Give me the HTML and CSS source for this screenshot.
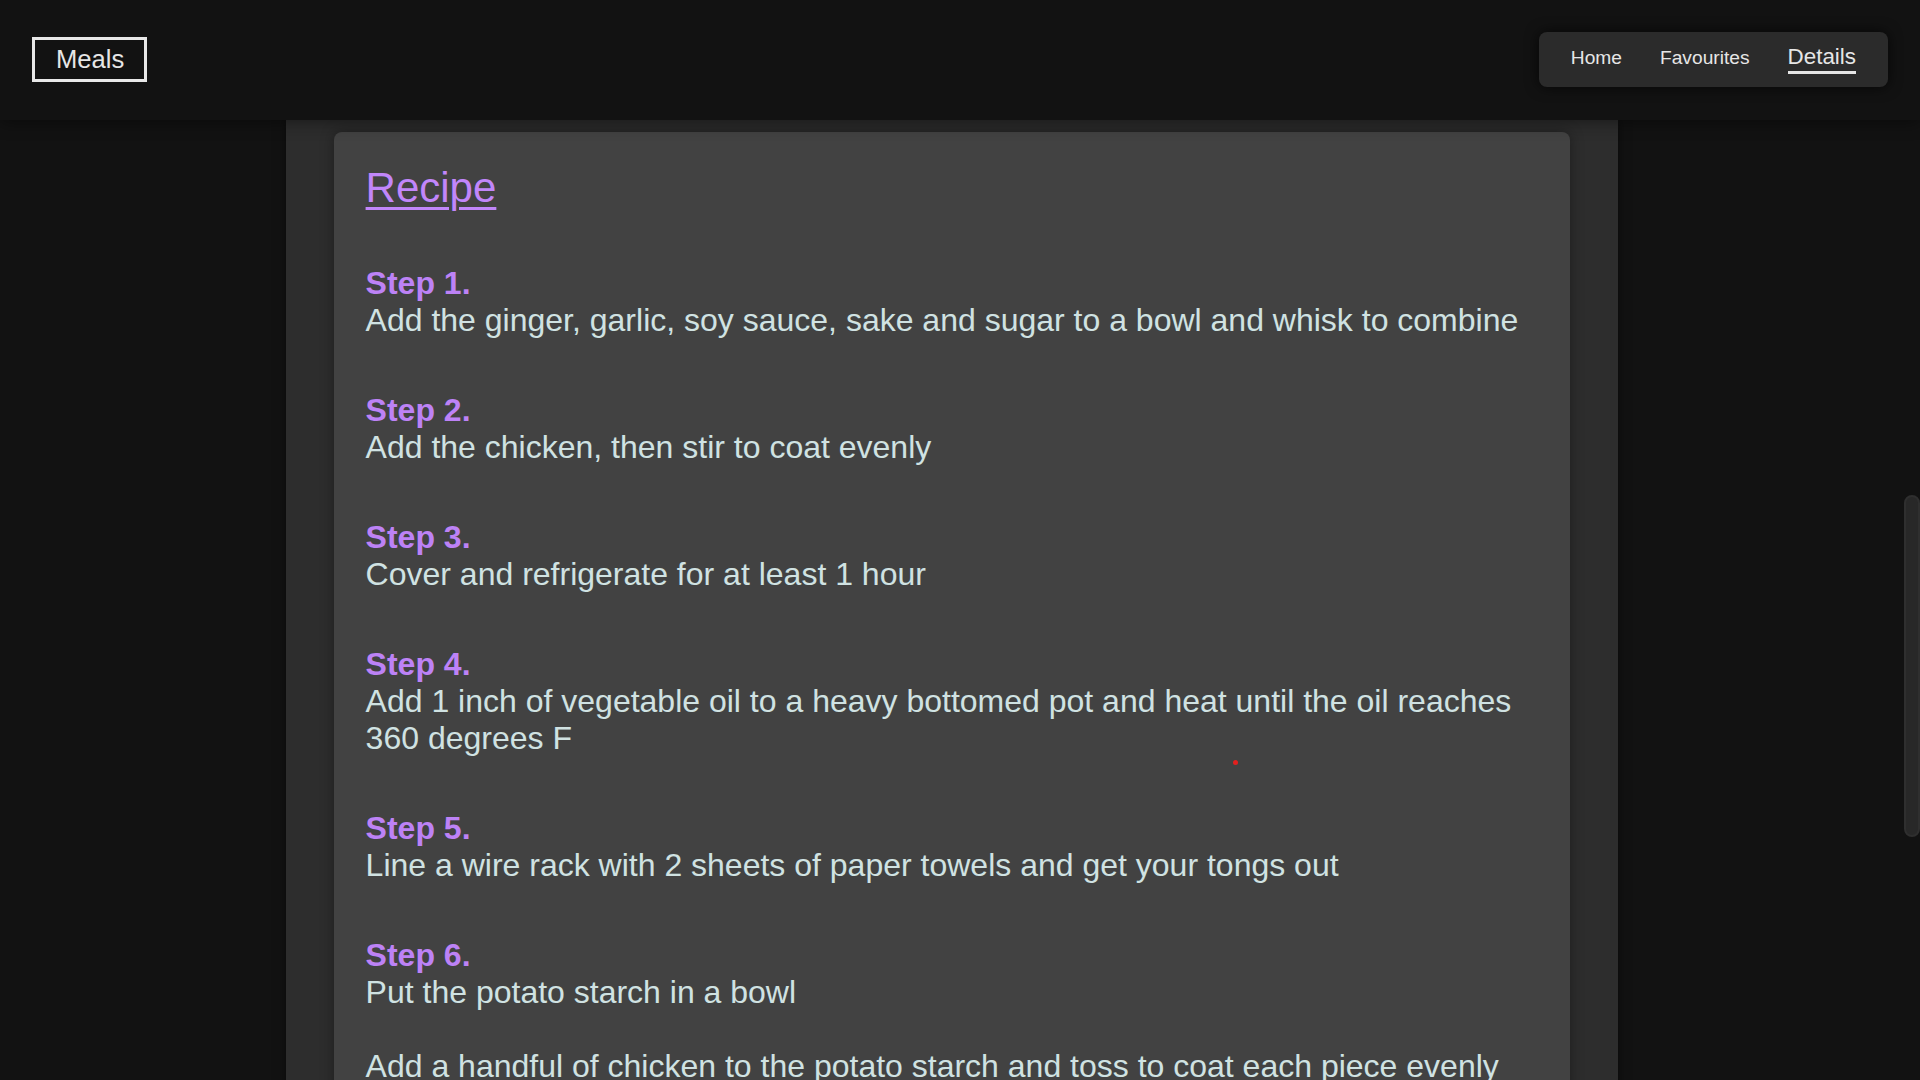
FILE: index.html
```html
<!DOCTYPE html>
<html lang="en">
<head>
<meta charset="utf-8">
<title>Meals – Details</title>
<link rel="stylesheet" href="styles.css">
</head>
<body>
  <header class="topbar">
    <a class="brand" href="#">Meals</a>
    <nav class="nav">
      <a class="nav-link" href="#">Home</a>
      <a class="nav-link" href="#">Favourites</a>
      <a class="nav-link nav-link--active" href="#">Details</a>
    </nav>
  </header>

  <div class="viewport">
    <main class="main">
      <div class="container">
        <section class="card">
          <h2 class="card-title">Recipe</h2>
          <div class="step">
            <h3 class="step-label">Step 1.</h3>
            <p class="step-text">Add the ginger, garlic, soy sauce, sake and sugar to a bowl and whisk to combine</p>
          </div>
          <div class="step">
            <h3 class="step-label">Step 2.</h3>
            <p class="step-text">Add the chicken, then stir to coat evenly</p>
          </div>
          <div class="step">
            <h3 class="step-label">Step 3.</h3>
            <p class="step-text">Cover and refrigerate for at least 1 hour</p>
          </div>
          <div class="step">
            <h3 class="step-label">Step 4.</h3>
            <p class="step-text">Add 1 inch of vegetable oil to a heavy bottomed pot and heat until the oil reaches 360 degrees F</p>
          </div>
          <div class="step">
            <h3 class="step-label">Step 5.</h3>
            <p class="step-text">Line a wire rack with 2 sheets of paper towels and get your tongs out</p>
          </div>
          <div class="step">
            <h3 class="step-label">Step 6.</h3>
            <p class="step-text">Put the potato starch in a bowl

Add a handful of chicken to the potato starch and toss to coat each piece evenly</p>
          </div>
          <div class="step">
            <h3 class="step-label">Step 7.</h3>
            <p class="step-text">Fry the karaage in batches until the exterior is a medium brown and the chicken is cooked through</p>
          </div>
        </section>
      </div>
    </main>
    <div class="scrollrail" aria-hidden="true">
      <div class="scrollthumb"></div>
    </div>
  </div>

  <span class="cursor-dot" aria-hidden="true"></span>
</body>
</html>
```

FILE: styles.css
```css
* {
  box-sizing: border-box;
}

html,
body {
  margin: 0;
  height: 100%;
}

body {
  background: #121212;
  color: #e6e6e6;
  font-family: "Liberation Sans", Arial, Helvetica, sans-serif;
  overflow: hidden;
  display: flex;
  flex-direction: column;
}

/* ---------- header ---------- */
.topbar {
  flex: 0 0 120px;
  display: flex;
  justify-content: space-between;
  align-items: flex-start;
  padding: 32px 32px 0;
  background: #121212;
  position: relative;
  z-index: 2;
  box-shadow: 0 2px 16px rgba(0, 0, 0, 0.45);
}

.brand {
  margin-top: 5px;
  display: inline-block;
  border: 3px solid #e8e8e8;
  padding: 5px 20px 5px 21px;
  color: #e6e6e6;
  text-decoration: none;
  font-size: 25.6px;
  line-height: normal;
}

.nav {
  display: flex;
  align-items: baseline;
  gap: 38px;
  background: #2b2b2b;
  border-radius: 8px;
  padding: 12px 32px 13px;
  box-shadow: 0 0 14px rgba(0, 0, 0, 0.7);
}

.nav-link {
  color: #e6e6e6;
  text-decoration: none;
  font-size: 19.2px;
  line-height: normal;
}

.nav-link--active {
  font-size: 22.4px;
  padding-bottom: 1px;
  border-bottom: 3px solid #e6e6e6;
}

/* ---------- body area ---------- */
.viewport {
  flex: 1;
  display: flex;
  min-height: 0;
}

.main {
  flex: 1;
  overflow: hidden;
}

.container {
  width: 70%;
  margin: 0 auto;
  background: #2d2d2d;
  padding: 12px 48px 48px;
  box-shadow: 0 0 10px rgba(0, 0, 0, 0.5);
  min-height: 100%;
}

.card {
  background: #424242;
  border-radius: 8px;
  padding: 32px 32px 32px;
  box-shadow: 0 0 14px rgba(0, 0, 0, 0.35);
}

.card-title {
  margin: 0 0 53px;
  font-size: 42px;
  font-weight: 400;
  line-height: normal;
  color: #c186fa;
  text-decoration: underline;
  text-decoration-thickness: 3px;
  text-underline-offset: 5px;
}

.step {
  margin-bottom: 53px;
}

.step-label {
  margin: 0;
  font-size: 32px;
  font-weight: 700;
  line-height: normal;
  color: #bd82f6;
}

.step-text {
  margin: 0;
  font-size: 32px;
  line-height: normal;
  color: #d0e2e2;
  white-space: pre-line;
}

/* ---------- scrollbar ---------- */
.scrollrail {
  flex: 0 0 16px;
  background: #121212;
}

.scrollthumb {
  margin-top: 375px;
  height: 342px;
  border-radius: 8px;
  background: #282828;
  border: 2px solid #2f2f2f;
}

.cursor-dot {
  position: fixed;
  left: 1233px;
  top: 760px;
  width: 5px;
  height: 5px;
  border-radius: 50%;
  background: #e3201e;
}
```
